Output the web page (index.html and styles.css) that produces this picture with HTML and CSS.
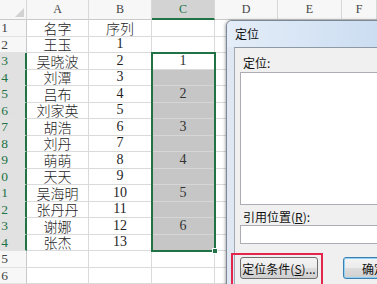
FILE: index.html
```html
<!DOCTYPE html>
<html>
<head>
<meta charset="utf-8">
<link rel="stylesheet" href="styles.css">
</head>
<body>
<div class="screen">
  <div class="sheet">
    <div class="col rowhdr">
      <div class="ch corner"><span class="tri"></span></div>
      <div class="rh"><span class="n">1</span></div>
      <div class="rh"><span class="n">2</span></div>
      <div class="rh on"><span class="n">3</span></div>
      <div class="rh on"><span class="n">4</span></div>
      <div class="rh on"><span class="n">5</span></div>
      <div class="rh on"><span class="n">6</span></div>
      <div class="rh on"><span class="n">7</span></div>
      <div class="rh on"><span class="n">8</span></div>
      <div class="rh on"><span class="n">9</span></div>
      <div class="rh on"><span class="n">10</span></div>
      <div class="rh on"><span class="n">11</span></div>
      <div class="rh on"><span class="n">12</span></div>
      <div class="rh on"><span class="n">13</span></div>
      <div class="rh on"><span class="n">14</span></div>
      <div class="rh"><span class="n">15</span></div>
      <div class="rh"><span class="n">16</span></div>
    </div>
    <div class="col colA">
      <div class="ch">A</div>
      <div class="cell cjk">名字</div>
      <div class="cell cjk">王玉</div>
      <div class="cell cjk">吴晓波</div>
      <div class="cell cjk">刘潭</div>
      <div class="cell cjk">吕布</div>
      <div class="cell cjk">刘家英</div>
      <div class="cell cjk">胡浩</div>
      <div class="cell cjk">刘丹</div>
      <div class="cell cjk">萌萌</div>
      <div class="cell cjk">天天</div>
      <div class="cell cjk">吴海明</div>
      <div class="cell cjk">张丹丹</div>
      <div class="cell cjk">谢娜</div>
      <div class="cell cjk">张杰</div>
      <div class="cell"></div>
      <div class="cell"></div>
    </div>
    <div class="col colB">
      <div class="ch">B</div>
      <div class="cell cjk">序列</div>
      <div class="cell">1</div>
      <div class="cell">2</div>
      <div class="cell">3</div>
      <div class="cell">4</div>
      <div class="cell">5</div>
      <div class="cell">6</div>
      <div class="cell">7</div>
      <div class="cell">8</div>
      <div class="cell">9</div>
      <div class="cell">10</div>
      <div class="cell">11</div>
      <div class="cell">12</div>
      <div class="cell">13</div>
      <div class="cell"></div>
      <div class="cell"></div>
    </div>
    <div class="col colC">
      <div class="ch on">C</div>
      <div class="cell"></div>
      <div class="cell"></div>
      <div class="sel">
        <div class="cell active">1</div>
        <div class="cell"></div>
        <div class="cell">2</div>
        <div class="cell"></div>
        <div class="cell">3</div>
        <div class="cell"></div>
        <div class="cell">4</div>
        <div class="cell"></div>
        <div class="cell">5</div>
        <div class="cell"></div>
        <div class="cell">6</div>
        <div class="cell"></div>
        <span class="handle"></span>
      </div>
      <div class="cell"></div>
      <div class="cell"></div>
    </div>
    <div class="col colD">
      <div class="ch">D</div>
      <div class="cell"></div><div class="cell"></div><div class="cell"></div><div class="cell"></div>
      <div class="cell"></div><div class="cell"></div><div class="cell"></div><div class="cell"></div>
      <div class="cell"></div><div class="cell"></div><div class="cell"></div><div class="cell"></div>
      <div class="cell"></div><div class="cell"></div><div class="cell"></div><div class="cell"></div>
    </div>
    <div class="col colE">
      <div class="ch">E</div>
      <div class="cell"></div><div class="cell"></div><div class="cell"></div><div class="cell"></div>
      <div class="cell"></div><div class="cell"></div><div class="cell"></div><div class="cell"></div>
      <div class="cell"></div><div class="cell"></div><div class="cell"></div><div class="cell"></div>
      <div class="cell"></div><div class="cell"></div><div class="cell"></div><div class="cell"></div>
    </div>
    <div class="col colF">
      <div class="ch">F</div>
      <div class="cell"></div><div class="cell"></div><div class="cell"></div><div class="cell"></div>
      <div class="cell"></div><div class="cell"></div><div class="cell"></div><div class="cell"></div>
      <div class="cell"></div><div class="cell"></div><div class="cell"></div><div class="cell"></div>
      <div class="cell"></div><div class="cell"></div><div class="cell"></div><div class="cell"></div>
    </div>
  </div>

  <div class="dialog">
    <div class="titlebar">定位</div>
    <div class="client">
      <div class="lbl">定位:</div>
      <div class="listbox"></div>
      <div class="lbl lbl2">引用位置(<u>R</u>):</div>
      <div class="input"></div>
      <div class="btns">
        <div class="btn">定位条件(<u>S</u>)...</div>
        <div class="btn def">确定</div>
      </div>
    </div>
    <div class="hl"></div>
  </div>
</div>
</body>
</html>
```

FILE: styles.css
```css
* {
  box-sizing: border-box;
  margin: 0;
  padding: 0;
}
body {
  margin: 0;
  background: #fff;
  font-family: "Liberation Serif", "Noto Sans CJK SC", serif;
}
.screen {
  position: relative;
  width: 377px;
  height: 284px;
  overflow: hidden;
  background: #fff;
}
.sheet {
  display: flex;
  height: 284px;
}
.col {
  display: flex;
  flex-direction: column;
  flex: none;
}
.rowhdr { width: 27px; }
.colA { width: 62px; }
.colB, .colC, .colD { width: 63px; }
.colE { width: 64px; }
.colF { flex: 1; }
.colC { position: relative; z-index: 2; }

.ch {
  height: 20px;
  flex: none;
  background: #f7f7f7;
  border-right: 1px solid #d8d8d8;
  border-bottom: 1px solid #c9c9c9;
  display: flex;
  align-items: center;
  justify-content: center;
  font: 12px "Liberation Serif", serif;
  color: #444;
}
.ch.on {
  background: #d3d3d3;
  color: #217346;
  border-bottom: 2px solid #217346;
}
.corner {
  align-items: flex-end;
  justify-content: flex-end;
  padding: 0 2px 2px 0;
}
.tri {
  width: 0;
  height: 0;
  border-left: 9px solid transparent;
  border-bottom: 9px solid #d2d2d2;
}
.rh {
  height: 16.5px;
  flex: none;
  background: #f7f7f7;
  border-right: 1px solid #c9c9c9;
  border-bottom: 1px solid #e2e2e2;
  display: flex;
  align-items: center;
  font: 13.5px "Liberation Serif", serif;
  color: #444;
  line-height: 1;
}
.rh .n {
  width: 9px;
  flex: none;
  display: flex;
  justify-content: flex-end;
  white-space: nowrap;
  letter-spacing: 1px;
}
.rh.on {
  background: #e1e1e1;
  color: #217346;
  border-right: 2px solid #217346;
}
.cell {
  height: 16.5px;
  flex: none;
  border-right: 1px solid #dadada;
  border-bottom: 1px solid #dadada;
  display: flex;
  align-items: center;
  justify-content: center;
  font: 14px "Liberation Serif", serif;
  color: #1e1e1e;
  line-height: 1;
  white-space: nowrap;
}
.cjk {
  font-family: "Noto Sans CJK SC", sans-serif;
  font-weight: 300;
  font-size: 14px;
}
.sel {
  position: relative;
  outline: 2px solid #217346;
  outline-offset: -1px;
}
.sel .cell {
  background: #c6c6c6;
  border-bottom-color: #d6d6d6;
  color: #333;
}
.sel .cell.active {
  background: #fff;
  border-bottom-color: #dadada;
}
.handle {
  position: absolute;
  right: -3px;
  bottom: -3px;
  width: 6px;
  height: 6px;
  background: #217346;
  border: 1px solid #fff;
}

.dialog {
  position: absolute;
  left: 226px;
  top: 20px;
  width: 200px;
  height: 290px;
  z-index: 5;
  border: 1px solid #7c8896;
  border-radius: 6px 6px 0 0;
  background: #dfe8f2;
  padding-left: 7px;
  display: flex;
  flex-direction: column;
  box-shadow: -1px 0 3px rgba(0, 0, 0, 0.3);
  font: 12px "Noto Sans CJK SC", sans-serif;
  color: #111;
}
.titlebar {
  height: 26px;
  line-height: 26px;
  flex: none;
  margin-left: -7px;
  padding-left: 8px;
  border-radius: 5px 5px 0 0;
  background: linear-gradient(to right, #e4edf8 0%, #d4e3f4 50%, #c4d8ef 100%);
  white-space: nowrap;
}
.client {
  flex: 1;
  background: #f0f0f0;
  border-left: 1px solid #9ea9b5;
  border-top: 1px solid #8e99a6;
  padding: 7px 0 0 5px;
}
.lbl {
  height: 16px;
  line-height: 16px;
  padding-left: 3px;
  white-space: nowrap;
}
.lbl2 { margin-top: 4px; }
.listbox {
  margin-top: 1px;
  height: 133px;
  width: 180px;
  background: #fff;
  border: 1px solid #abadb3;
}
.input {
  height: 19px;
  width: 180px;
  background: #fff;
  border: 1px solid #abadb3;
}
.btns {
  margin-top: 13px;
  display: flex;
  gap: 25px;
}
.btn {
  height: 22px;
  width: 78px;
  flex: none;
  border: 1px solid #707070;
  border-radius: 3px;
  background: linear-gradient(#f4f4f4 0%, #ebebeb 50%, #dddddd 51%, #cfcfcf 100%);
  display: flex;
  align-items: center;
  justify-content: center;
  white-space: nowrap;
}
.btn.def {
  width: 62px;
  border-color: #3c7fb1;
  box-shadow: inset 0 0 0 1px #8fd2f5;
}
.hl {
  position: absolute;
  left: 4px;
  top: 232px;
  width: 92px;
  height: 60px;
  border: 2px solid #e2264c;
}
```
